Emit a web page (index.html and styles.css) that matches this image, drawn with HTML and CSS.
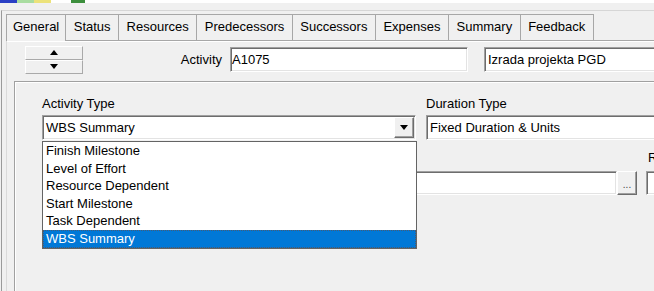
FILE: index.html
```html
<!DOCTYPE html>
<html lang="en">
<head>
    <meta charset="UTF-8">
    <meta name="viewport" content="width=device-width, initial-scale=1.0">
    <title>Activity Details - General</title>
    <link rel="stylesheet" href="styles.css">
</head>
<body>
    <div class="topbar">
        <span class="swatch blue"></span>
        <span class="swatch green"></span>
        <span class="swatch yellow"></span>
        <span class="swatch blank"></span>
        <span class="swatch dark"></span>
    </div>
    <div class="frame">
        <ul class="tabs">
            <li class="tab active">General</li>
            <li class="tab">Status</li>
            <li class="tab">Resources</li>
            <li class="tab">Predecessors</li>
            <li class="tab">Successors</li>
            <li class="tab">Expenses</li>
            <li class="tab">Summary</li>
            <li class="tab">Feedback</li>
        </ul>
        <div class="page">
            <div class="toprow">
                <div class="stepper">
                    <div class="step">
                        <svg width="8" height="5" viewBox="0 0 8 5"><path d="M0 5 L4 0 L8 5 Z" fill="#000"/></svg>
                    </div>
                    <div class="step">
                        <svg width="8" height="5" viewBox="0 0 8 5"><path d="M0 0 L8 0 L4 5 Z" fill="#000"/></svg>
                    </div>
                </div>
                <span class="act-label">Activity</span>
                <div class="box id-box">A1075</div>
                <div class="box name-box">Izrada projekta PGD</div>
            </div>
            <div class="group">
                <div class="row">
                    <div class="col col-wide">
                        <div class="lbl">Activity Type</div>
                        <div class="box combo">
                            <span class="combo-text">WBS Summary</span>
                            <span class="combo-btn">
                                <svg width="8" height="5" viewBox="0 0 8 5"><path d="M0 0 L8 0 L4 5 Z" fill="#000"/></svg>
                            </span>
                            <ul class="droplist">
                                <li>Finish Milestone</li>
                                <li>Level of Effort</li>
                                <li>Resource Dependent</li>
                                <li>Start Milestone</li>
                                <li>Task Dependent</li>
                                <li class="selected">WBS Summary</li>
                            </ul>
                        </div>
                    </div>
                    <div class="col col-wide">
                        <div class="lbl">Duration Type</div>
                        <div class="box combo">
                            <span class="combo-text">Fixed Duration &amp; Units</span>
                        </div>
                    </div>
                </div>
                <div class="row row2">
                    <div class="col col-wbs">
                        <div class="lbl"></div>
                        <div class="pick">
                            <div class="box pick-box"></div>
                            <span class="dots">...</span>
                        </div>
                    </div>
                    <div class="col col-mgr">
                        <div class="lbl">Responsible Manager</div>
                        <div class="box mgr-box"></div>
                    </div>
                </div>
            </div>
        </div>
    </div>
</body>
</html>
```

FILE: styles.css
```css
body {
    margin: 0;
    width: 654px;
    height: 291px;
    overflow: hidden;
    background-color: #f0f0f0;
    font-family: "Liberation Sans", Arial, sans-serif;
    font-size: 13px;
    color: #000;
}
.topbar {
    display: flex;
    height: 3px;
    background-color: #fff;
}
.swatch {
    width: 17px;
}
.swatch.blue { background-color: #2a3fc4; }
.swatch.green { background-color: #a9dca0; }
.swatch.yellow { background-color: #ece27a; }
.swatch.blank { width: 20px; }
.swatch.dark { width: 14px; background-color: #3d8f3d; }
.frame {
    box-sizing: border-box;
    height: 281px;
    margin: 7px 0 0 1px;
    overflow: hidden;
    border-left: 1px solid #9a9a9a;
    border-top: 1px solid #d6d6d6;
    padding: 3px 0 0 4px;
}
.tabs {
    display: flex;
    align-items: flex-start;
    list-style: none;
    margin: 0;
    padding: 0;
    height: 26px;
}
.tab {
    box-sizing: border-box;
    height: 26px;
    line-height: 24px;
    padding: 0 7.5px;
    margin-left: -1px;
    border: 1px solid #a7a7a7;
    border-bottom: none;
    background-color: #f0f0f0;
    white-space: nowrap;
}
.tab:first-child {
    margin-left: 0;
}
.tab.active {
    position: relative;
    z-index: 1;
    height: 27px;
    padding: 0 6px;
}
.page {
    height: 260px;
    border-top: 1px solid #a7a7a7;
    border-left: 1px solid #dadada;
    box-shadow: inset 0 1px #fff;
}
.toprow {
    display: flex;
    align-items: center;
    height: 25px;
    padding: 6px 0 0 18px;
}
.toprow > * {
    flex-shrink: 0;
}
.stepper {
    display: flex;
    flex-direction: column;
    width: 58px;
    height: 28px;
}
.step {
    flex: 1;
    display: flex;
    justify-content: center;
    align-items: center;
    border: 1px solid;
    border-color: #fff #a9a9a9 #a9a9a9 #fff;
}
.act-label {
    width: 139px;
    text-align: right;
    margin-right: 8px;
}
.box {
    box-sizing: border-box;
    height: 25px;
    line-height: 23px;
    padding-left: 1px;
    background-color: #fff;
    border: 1px solid;
    border-color: #a0a0a0 #fff #fff #a0a0a0;
    box-shadow: inset 1px 1px #6d6d6d, inset -1px -1px #e3e3e3;
    white-space: nowrap;
}
.id-box {
    width: 238px;
}
.name-box {
    width: 220px;
    margin-left: 16px;
    padding-left: 3px;
}
.group {
    width: 700px;
    height: 220px;
    margin: 9px 0 0 7px;
    padding: 14px 0 0 27px;
    border: 1px solid #a0a0a0;
    box-shadow: inset 1px 1px #fff;
}
.row {
    display: flex;
    gap: 10px;
}
.row2 {
    margin-top: 10px;
    gap: 9px;
}
.col {
    display: flex;
    flex-direction: column;
    flex-shrink: 0;
}
.col-wide {
    width: 374px;
}
.lbl {
    height: 15px;
    line-height: 15px;
    white-space: nowrap;
}
.combo {
    position: relative;
    display: flex;
    align-items: center;
    margin-top: 4px;
    padding-left: 3px;
}
.combo-text {
    flex: 1;
}
.combo-btn {
    box-sizing: border-box;
    width: 20px;
    height: 21px;
    margin-right: 1px;
    display: flex;
    justify-content: center;
    align-items: center;
    background-color: #f0f0f0;
    border: 1px solid;
    border-color: #fff #6d6d6d #6d6d6d #fff;
    box-shadow: inset -1px -1px #a0a0a0;
}
.droplist {
    position: absolute;
    z-index: 2;
    top: calc(100% + 2px);
    left: -1px;
    box-sizing: border-box;
    width: 375px;
    margin: 0;
    padding: 0;
    list-style: none;
    background-color: #fff;
    border: 1px solid #646464;
}
.droplist li {
    height: 17.6px;
    line-height: 17.6px;
    padding-left: 3px;
}
.droplist li.selected {
    background-color: #0078d7;
    color: #fff;
    outline: 1px dotted #4a5a70;
    outline-offset: -1px;
}
.col-wbs {
    width: 595px;
}
.row2 .lbl {
    margin-left: 2px;
}
.pick {
    display: flex;
    margin-top: 6px;
}
.pick-box {
    flex: 1;
    height: 24px;
}
.dots {
    box-sizing: border-box;
    width: 20px;
    height: 24px;
    line-height: 26px;
    text-align: center;
    font-size: 10px;
    color: #444;
    background-color: #f0f0f0;
    border: 1px solid;
    border-color: #fff #6d6d6d #6d6d6d #fff;
    box-shadow: inset -1px -1px #a0a0a0;
}
.col-mgr {
    width: 200px;
}
.mgr-box {
    height: 24px;
    margin-top: 6px;
}
```
